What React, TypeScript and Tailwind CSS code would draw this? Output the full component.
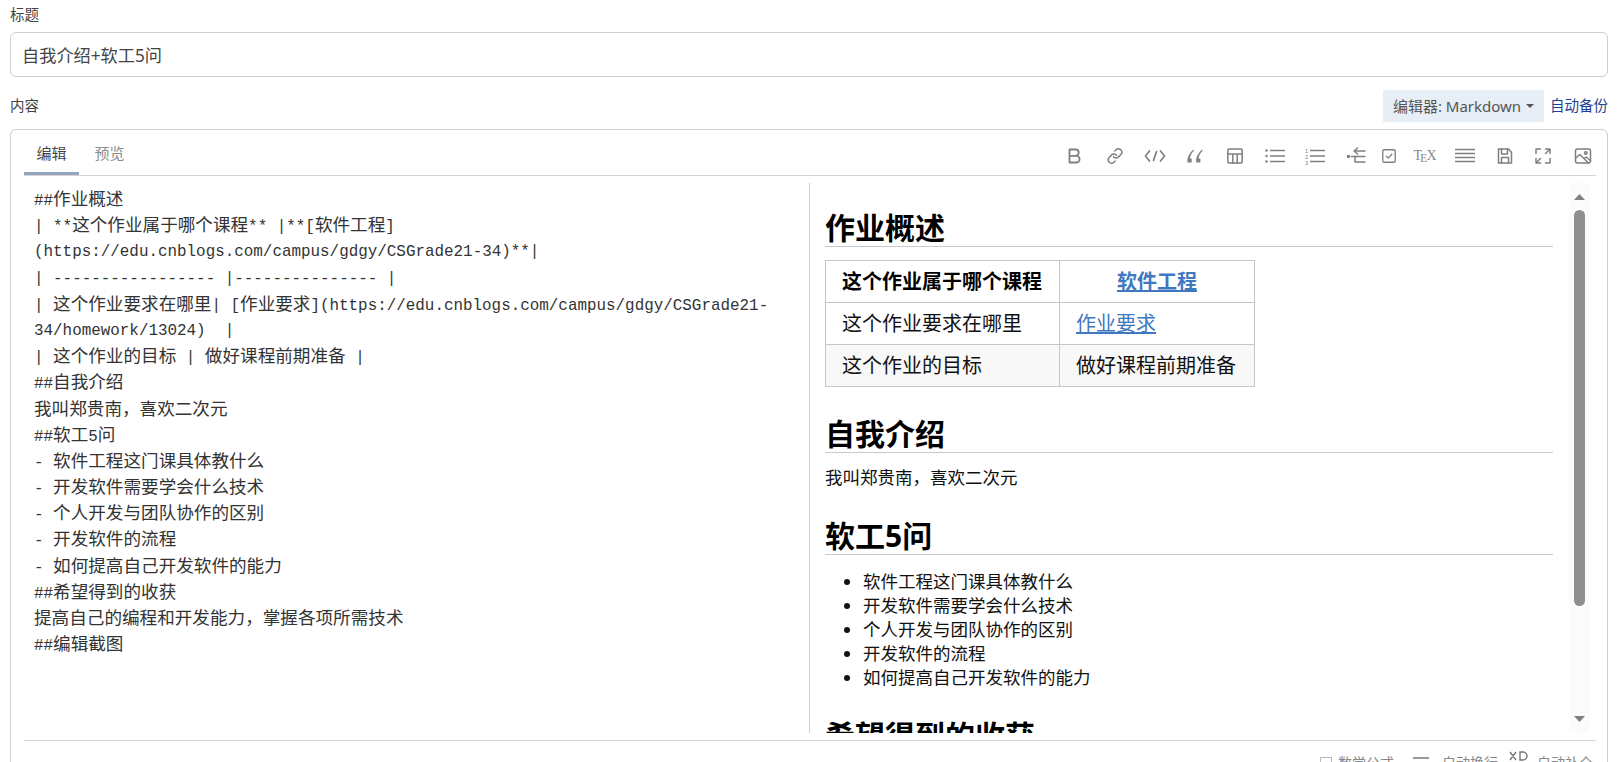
import type { ReactNode } from 'react';

const sourceLines = [
  '##作业概述',
  '| **这个作业属于哪个课程** |**[软件工程]',
  '(https://edu.cnblogs.com/campus/gdgy/CSGrade21-34)**|',
  '| ----------------- |--------------- |',
  '| 这个作业要求在哪里| [作业要求](https://edu.cnblogs.com/campus/gdgy/CSGrade21-',
  '34/homework/13024)  |',
  '| 这个作业的目标 | 做好课程前期准备 |',
  '##自我介绍',
  '我叫郑贵南，喜欢二次元',
  '##软工5问',
  '- 软件工程这门课具体教什么',
  '- 开发软件需要学会什么技术',
  '- 个人开发与团队协作的区别',
  '- 开发软件的流程',
  '- 如何提高自己开发软件的能力',
  '##希望得到的收获',
  '提高自己的编程和开发能力，掌握各项所需技术',
  '##编辑截图',
];

const questions = [
  '软件工程这门课具体教什么',
  '开发软件需要学会什么技术',
  '个人开发与团队协作的区别',
  '开发软件的流程',
  '如何提高自己开发软件的能力',
];

function SourceLine({ text }: { text: string }) {
  // Latin and CJK have different widths in the original editor font
  const runs = text.split(/([\u2E80-\uFFEF]+)/).filter(Boolean);
  return (
    <div className="h-[26.2px] whitespace-pre leading-[26.2px]">
      {runs.map((run, i) =>
        /[\u2E80-\uFFEF]/.test(run) ? (
          <span key={i} className="font-['Noto_Sans_CJK_SC',sans-serif] text-[17.6px]">
            {run}
          </span>
        ) : (
          <span key={i} className="font-['Liberation_Mono',monospace] text-[15.9px]">
            {run}
          </span>
        ),
      )}
    </div>
  );
}

function Icon({ children, size = 18 }: { children: ReactNode; size?: number }) {
  return (
    <svg
      width={size}
      height={size}
      viewBox="0 0 18 18"
      fill="none"
      stroke="#7f7f7f"
      strokeWidth={1.5}
      strokeLinecap="round"
      strokeLinejoin="round"
    >
      {children}
    </svg>
  );
}

function Tool({ className, children }: { className: string; children: ReactNode }) {
  return <div className={`flex items-center justify-center ${className}`}>{children}</div>;
}

function Toolbar() {
  return (
    <div className="-mr-[7px] flex h-full items-center pt-[7px]">
      {/* Bold */}
      <Tool className="w-[40px]">
        <Icon>
          <path strokeWidth={1.8} d="M3.5 2.5h6a3.2 3.2 0 0 1 0 6.4h-6zM3.5 8.9h6.8a3.3 3.3 0 0 1 0 6.6H3.5z" />
        </Icon>
      </Tool>
      {/* Link */}
      <Tool className="w-[40px]">
        <Icon>
          <path d="M7.5 9.8a3.3 3.3 0 0 0 4.8.3l2.6-2.6a3.4 3.4 0 0 0-4.8-4.8L8.8 4" />
          <path d="M10.5 8.2a3.3 3.3 0 0 0-4.8-.3l-2.6 2.6a3.4 3.4 0 0 0 4.8 4.8L9.2 14" />
        </Icon>
      </Tool>
      {/* Code */}
      <Tool className="w-[40px]">
        <svg width="22" height="18" viewBox="0 0 22 18" fill="none" stroke="#7f7f7f" strokeWidth={1.7} strokeLinecap="round" strokeLinejoin="round">
          <path d="M5.5 4 1.5 9l4 5M16.5 4l4 5-4 5M12.5 4.5l-3 9" />
        </svg>
      </Tool>
      {/* Quote */}
      <Tool className="w-[40px]">
        <svg width="18" height="18" viewBox="0 0 18 18" fill="#7f7f7f">
          <path d="M7.5 2.5C4.5 5 2 8.5 1.5 12v3.5h4.2V11.6H3.7C4.2 8.8 5.8 6 8 3.6zM16.2 2.5c-3 2.5-5.5 6-6 9.5v3.5h4.2v-3.9h-2C12.900 8.800 14.500 6 16.700 3.600z" />
        </svg>
      </Tool>
      {/* Table */}
      <Tool className="w-[40px]">
        <Icon>
          <rect x="1.800" y="2" width="14.400" height="14" rx="1.500" />
          <path d="M1.800 7h14.400M6.800 7v9M11.200 7v9" />
        </Icon>
      </Tool>
      {/* Unordered list */}
      <Tool className="w-[40px]">
        <svg width="20" height="18" viewBox="0 0 20 18" fill="none" stroke="#7f7f7f" strokeWidth={1.4}>
          <circle cx="1.500" cy="3.500" r="1.200" fill="#7f7f7f" stroke="none" />
          <circle cx="1.500" cy="9" r="1.200" fill="#7f7f7f" stroke="none" />
          <circle cx="1.500" cy="14.500" r="1.200" fill="#7f7f7f" stroke="none" />
          <path d="M5 3.500h15M5 9h15M5 14.500h15" />
        </svg>
      </Tool>
      {/* Ordered list */}
      <Tool className="w-[40px]">
        <svg width="20" height="18" viewBox="0 0 20 18" fill="none" stroke="#7f7f7f" strokeWidth={1.4}>
          <text x="0" y="5.500" fontSize="5.500" fill="#7f7f7f" stroke="none" fontFamily="Liberation Sans">1</text>
          <text x="0" y="11.500" fontSize="5.500" fill="#7f7f7f" stroke="none" fontFamily="Liberation Sans">2</text>
          <text x="0" y="17.500" fontSize="5.500" fill="#7f7f7f" stroke="none" fontFamily="Liberation Sans">3</text>
          <path d="M5 3.500h15M5 9h15M5 14.500h15" />
        </svg>
      </Tool>
      {/* Indent arrow */}
      <Tool className="ml-px w-[40px]">
        <svg width="20" height="18" viewBox="0 0 20 18" fill="none" stroke="#7f7f7f" strokeWidth={1.5} strokeLinecap="round" strokeLinejoin="round">
          <circle cx="2.500" cy="9.500" r="1.800" fill="#7f7f7f" stroke="none" />
          <path d="M8 4h11M11.500 1 8 4l3.500 3M5.500 9.500H19M9 15h10M9 9.500V15" />
        </svg>
      </Tool>
      {/* Task */}
      <Tool className="w-[26px]">
        <Icon size={16}>
          <rect x="2" y="2" width="14" height="14" rx="1.500" />
          <path d="m6 9.200 2.200 2.200L12.200 7" />
        </Icon>
      </Tool>
      {/* TeX */}
      <Tool className="w-[46px]">
        <div className="flex font-['Liberation_Serif',serif] text-[14px] leading-none text-[#8a8a8a]">
          <span>T</span>
          <span className="-ml-[2px] mt-[3px] text-[12px]">E</span>
          <span className="-ml-[1px]">X</span>
        </div>
      </Tool>
      {/* Horizontal rule */}
      <Tool className="w-[34px]">
        <svg width="20" height="16" viewBox="0 0 20 16" fill="none" stroke="#7f7f7f" strokeWidth={1.5}>
          <path d="M0 1.500h20M0 5.500h20M0 9.500h20M0 13.500h20" />
        </svg>
      </Tool>
      {/* Save */}
      <Tool className="w-[46px]">
        <Icon>
          <path d="M2.500 2h10l3 3.200V16h-13z" />
          <path d="M5.500 2v5h6V2M5.500 16v-5.500h7V16" />
        </Icon>
      </Tool>
      {/* Fullscreen */}
      <Tool className="w-[30px]">
        <Icon>
          <path d="M2 6.500V2h4.500M11.500 2H16v4.500M16 11.500V16h-4.500M6.500 16H2v-4.500M15.500 2.500l-4 4M2.500 15.500l4-4" />
        </Icon>
      </Tool>
      {/* Image */}
      <Tool className="ml-[5px] w-[40px]">
        <Icon>
          <rect x="1.500" y="2" width="15" height="14" rx="2" />
          <circle cx="11.800" cy="6" r="1.300" />
          <path d="m1.800 11 4-3.500 8.500 8.300M10 11.500l2-1.500 4.500 3.500" />
        </Icon>
      </Tool>
    </div>
  );
}

function Preview() {
  const heading = 'mt-[29px] h-[37px] border-b border-[#c9c9c9] text-[30px] leading-[36px] font-bold text-black';
  const cell = 'border border-[#c6c6c6] px-[16px] h-[42px] py-0 text-[20px] leading-[24px]';

  return (
    <div className="h-full flex-1 overflow-hidden pr-[16px] pl-[15px] font-['Noto_Sans','Noto_Sans_CJK_SC',sans-serif] text-[17.5px] leading-[24px] text-[#111]">
      <h2 className="mt-[27px] h-[37px] border-b border-[#c9c9c9] text-[30px] leading-[36px] font-bold text-black">作业概述</h2>

      <table className="mt-[13px] w-[429px] table-fixed border-collapse">
        <colgroup>
          <col className="w-[234px]" />
          <col className="w-[195px]" />
        </colgroup>
        <tbody>
          <tr>
            <td className={`${cell} font-bold text-black`}>这个作业属于哪个课程</td>
            <td className={`${cell} text-center font-bold text-[#4078c0] underline`}>软件工程</td>
          </tr>
          <tr>
            <td className={cell}>这个作业要求在哪里</td>
            <td className={`${cell} text-[#4078c0] underline`}>作业要求</td>
          </tr>
          <tr className="bg-[#f8f8f8]">
            <td className={cell}>这个作业的目标</td>
            <td className={cell}>做好课程前期准备</td>
          </tr>
        </tbody>
      </table>

      <h2 className={heading}>自我介绍</h2>
      <p className="mt-[12px]">我叫郑贵南，喜欢二次元</p>

      <h2 className={heading}>软工5问</h2>
      <ul className="mt-[14px] list-disc pl-[38px]">
        {questions.map((q) => (
          <li key={q}>{q}</li>
        ))}
      </ul>

      <h2 className={heading}>希望得到的收获</h2>
    </div>
  );
}

function FakeScrollbar() {
  return (
    <div className="relative flex h-full w-[20px] flex-col items-center bg-[#fbfbfb] pt-[11px] pb-[11px]">
      <svg width="11" height="6" viewBox="0 0 11 6">
        <polygon points="5.500,0 11,6 0,6" fill="#808080" />
      </svg>
      <div className="mt-[10px] h-[396px] w-[11px] rounded-full bg-[#8f8f8f]" />
      <div className="flex-1" />
      <svg width="11" height="6" viewBox="0 0 11 6">
        <polygon points="0,0 11,0 5.500,6" fill="#808080" />
      </svg>
    </div>
  );
}

export default function App() {
  return (
    <div className="h-screen overflow-hidden bg-white px-[10px] font-['Noto_Sans','Noto_Sans_CJK_SC',sans-serif] text-[#444]">
      {/* Title */}
      <label className="block h-[32px] pt-[3px] text-[14.500px] leading-[22px] text-[#444]">标题</label>
      <input
        className="block h-[45px] w-full rounded-[6px] border border-[#cfcfcf] bg-white px-[11px] text-[17.200px] text-[#444] outline-none"
        defaultValue="自我介绍+软工5问"
      />

      {/* Content header */}
      <div className="flex items-center justify-between pt-[13px] pb-[7px]">
        <label className="text-[14.500px] text-[#444]">内容</label>
        <div className="flex items-center">
          <button className="flex h-[32px] w-[161px] items-center justify-center gap-[5px] bg-[#e7eef6] text-[15px] text-[#555]">
            编辑器: Markdown
            <svg width="8" height="4" viewBox="0 0 8 4">
              <polygon points="0,0 8,0 4,4" fill="#555" />
            </svg>
          </button>
          <span className="ml-[6px] text-[14.500px] whitespace-nowrap text-[#1c3f8f]">自动备份</span>
        </div>
      </div>

      {/* Editor panel */}
      <div className="h-[700px] rounded-t-[6px] border border-[#cfcfcf] pr-[11px] pl-[13px]">
        <div className="flex h-[46px] items-end justify-between border-b border-[#d4d4d4]">
          <div className="flex text-[15px]">
            <div className="flex h-[45px] w-[55px] items-center justify-center border-b-[3px] border-[#93a4bf] pt-[5px] text-[#444]">编辑</div>
            <div className="ml-[3px] flex h-[45px] w-[55px] items-center justify-center pt-[2px] text-[#8c8c8c]">预览</div>
          </div>
          <Toolbar />
        </div>

        <div className="mt-[7px] flex h-[550px]">
          <div className="h-full w-[786px] shrink-0 border-r border-[#cfcfcf] pt-[2px] pl-[10px] text-[#333]">
            {sourceLines.map((line, i) => (
              <SourceLine key={i} text={line} />
            ))}
          </div>
          <Preview />
          <FakeScrollbar />
          <div className="w-[7px]" />
        </div>

        {/* Status bar, cut off by the window edge */}
        <div className="mt-[7px] flex items-center justify-end border-t border-[#d4d4d4] pt-[12px] pr-[3px] text-[14px] leading-[20px] text-[#888]">
          <div className="h-[12px] w-[12px] border border-[#bbb]" />
          <span className="ml-[6px]">数学公式</span>
          <svg className="ml-[19px]" width="16" height="14" viewBox="0 0 16 14" fill="none" stroke="#777" strokeWidth={1.4}>
            <path d="M0 2h16M0 7h16M0 12h10" />
          </svg>
          <span className="ml-[13px]">自动换行</span>
          <svg className="ml-[10px] -mt-[6px]" width="22" height="18" viewBox="0 0 22 18" fill="none" stroke="#777" strokeWidth={1.4}>
            <path d="M2 1l6 8M8 1 2 9M12 1h3a4 4 0 0 1 0 8h-3zM12 1v8" />
          </svg>
          <span className="ml-[7px]">自动补全</span>
        </div>
      </div>
    </div>
  );
}
